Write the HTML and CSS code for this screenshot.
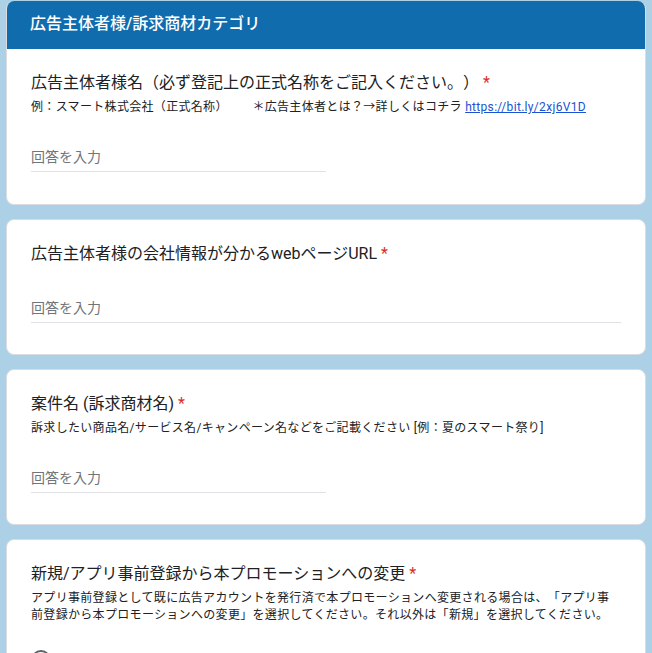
FILE: index.html
```html
<!DOCTYPE html>
<html lang="ja">
<head>
    <meta charset="UTF-8">
    <title>広告主体者様/訴求商材カテゴリ</title>
    <link rel="stylesheet" href="styles.css">
</head>
<body>
<div class="form">
    <div class="card section">
        <div class="section-head">広告主体者様/訴求商材カテゴリ</div>
        <div class="card-body">
            <div class="q-title">広告主体者様名（必ず登記上の正式名称をご記入ください。） <span class="req">*</span></div>
            <div class="q-desc">例：スマート株式会社（正式名称）　　＊広告主体者とは？→詳しくはコチラ <a href="#">https://bit.ly/2xj6V1D</a></div>
            <div class="answer half">回答を入力</div>
        </div>
    </div>

    <div class="card">
        <div class="card-body">
            <div class="q-title">広告主体者様の会社情報が分かるwebページURL <span class="req">*</span></div>
            <div class="answer">回答を入力</div>
        </div>
    </div>

    <div class="card">
        <div class="card-body">
            <div class="q-title">案件名 (訴求商材名) <span class="req">*</span></div>
            <div class="q-desc">訴求したい商品名/サービス名/キャンペーン名などをご記載ください [例：夏のスマート祭り]</div>
            <div class="answer half">回答を入力</div>
        </div>
    </div>

    <div class="card">
        <div class="card-body">
            <div class="q-title">新規/アプリ事前登録から本プロモーションへの変更 <span class="req">*</span></div>
            <div class="q-desc">アプリ事前登録として既に広告アカウントを発行済で本プロモーションへ変更される場合は、「アプリ事前登録から本プロモーションへの変更」を選択してください。それ以外は「新規」を選択してください。</div>
            <label class="option"><span class="radio"></span>新規</label>
        </div>
    </div>
</div>
</body>
</html>
```

FILE: styles.css
```css
*{
    margin: 0;
    padding: 0;
    box-sizing: border-box;
}
body{
    background: #acd1e6;
    font-family: Roboto, "Noto Sans CJK JP", sans-serif;
    color: #202124;
    text-spacing-trim: space-all;
}
.form{
    padding: 1px 6px 0;
    display: flex;
    flex-direction: column;
    gap: 14px;
}
.card{
    background: #fff;
    border: 1px solid #dadce0;
    border-radius: 8px;
    overflow: hidden;
}
.section{
    border-top: none;
}
.section-head{
    height: 48px;
    background: #116cad;
    color: #fff;
    font-size: 16px;
    font-weight: 500;
    line-height: 46px;
    padding-left: 24px;
    margin: 0 -1px;
}
.card-body{
    padding: 24px 24px 31px;
}
.section .card-body{
    padding-bottom: 32px;
}
.q-title{
    font-size: 16px;
    line-height: 20px;
}
.req{
    color: #d93025;
}
.q-desc{
    margin-top: 6px;
    font-size: 12px;
    letter-spacing: 0.32px;
    line-height: 17px;
}
.q-desc a{
    color: #1a52d4;
}
.answer{
    margin-top: 31px;
    padding-bottom: 4px;
    border-bottom: 1px solid #dfe1e4;
    font-size: 14px;
    line-height: 20px;
    color: #70757a;
}
.q-title + .answer{
    margin-top: 34px;
}
.answer.half{
    width: 50%;
}
.option{
    display: flex;
    align-items: center;
    gap: 12px;
    margin-top: 26px;
    font-size: 14px;
    line-height: 20px;
}
.radio{
    width: 20px;
    height: 20px;
    border: 2px solid #5f6368;
    border-radius: 50%;
}
```
